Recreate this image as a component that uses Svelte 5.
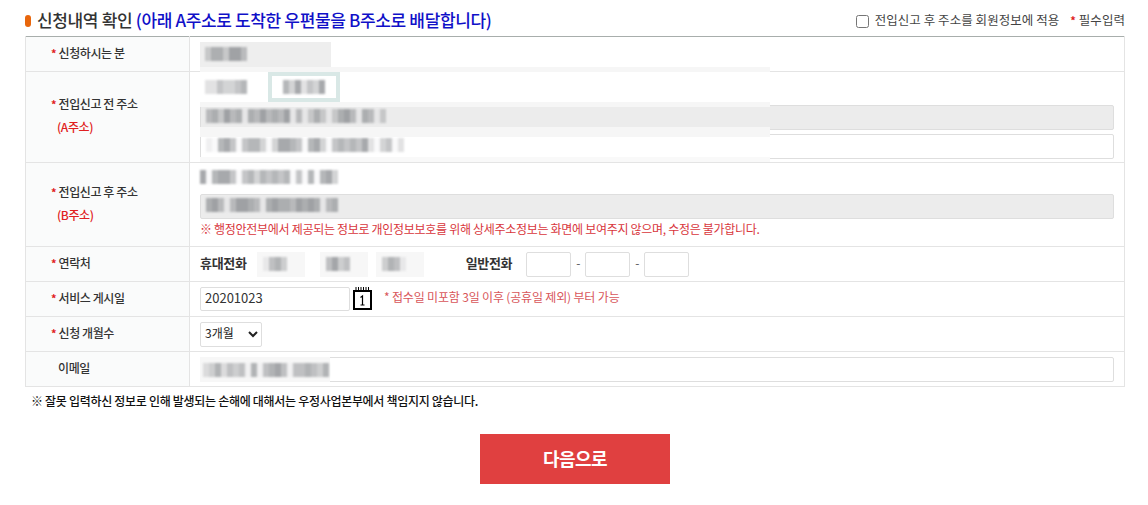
<script>
    // 원본에서 모자이크 처리된 개인정보 영역: 숫자는 셀 농도(0-9)
    const masks = {
        name: '3553664',
        zip: '2243345',
        zip2: '5362436',
        addr1: '453645 5464546 4 353 3564 54 3',
        addr2: '1 564 4553 36654 563 4545462 34 2',
        newAddr: '6 5664 45354545 4 5 563',
        road: '564 46654 565546565 45',
        tel1: '1453',
        tel2: '4634',
        tel3: '3541',
        email: '2352434 5 4564 445435'
    };

    function cells(key) {
        return masks[key].split('').map((c) => (c === ' ' ? 0.04 : Number(c) / 10));
    }
</script>

{#snippet mask(key)}
    <span class="mosaic">
        {#each cells(key) as o}
            <i style="opacity: {o}"></i>
        {/each}
    </span>
{/snippet}

<div class="page">
    <div class="head">
        <h2><span class="dot"></span>신청내역 확인 <em>(아래 A주소로 도착한 우편물을 B주소로 배달합니다)</em></h2>
        <div class="head-right">
            <label><input type="checkbox" />전입신고 후 주소를 회원정보에 적용</label>
            <span class="req-info"><b>*</b> 필수입력</span>
        </div>
    </div>

    <table>
        <tbody>
            <tr class="h35">
                <th><b>*</b> 신청하시는 분</th>
                <td>
                    <div class="patch name">{@render mask('name')}</div>
                </td>
            </tr>
            <tr class="h91">
                <th class="two">
                    <div><b>*</b> 전입신고 전 주소</div>
                    <div class="sub">(A주소)</div>
                </th>
                <td class="addr-a">
                    <div class="band top"></div>
                    <div class="zip-row">
                        <div class="zip">{@render mask('zip')}</div>
                        <div class="zip-found">{@render mask('zip2')}</div>
                    </div>
                    <div class="field gray">{@render mask('addr1')}</div>
                    <div class="field">{@render mask('addr2')}</div>
                    <div class="band b1"></div>
                    <div class="band b2"></div>
                    <div class="band b3"></div>
                </td>
            </tr>
            <tr class="h84">
                <th class="two">
                    <div><b>*</b> 전입신고 후 주소</div>
                    <div class="sub">(B주소)</div>
                </th>
                <td class="addr-b">
                    <div class="plain">{@render mask('newAddr')}</div>
                    <div class="field gray tall">{@render mask('road')}</div>
                    <p class="warn">※ 행정안전부에서 제공되는 정보로 개인정보보호를 위해 상세주소정보는 화면에 보여주지 않으며, 수정은 불가합니다.</p>
                </td>
            </tr>
            <tr class="h35">
                <th><b>*</b> 연락처</th>
                <td>
                    <div class="phone">
                        <strong>휴대전화</strong>
                        <div class="tel first">{@render mask('tel1')}</div>
                        <div class="tel second">{@render mask('tel2')}</div>
                        <div class="tel third">{@render mask('tel3')}</div>
                        <strong class="landline">일반전화</strong>
                        <input class="num" type="text" />
                        <span class="dash">-</span>
                        <input class="num" type="text" />
                        <span class="dash">-</span>
                        <input class="num" type="text" />
                    </div>
                </td>
            </tr>
            <tr class="h35">
                <th><b>*</b> 서비스 게시일</th>
                <td>
                    <div class="date-row">
                        <input class="date" type="text" value="20201023" />
                        <svg class="cal" width="19" height="23" viewBox="0 0 19 23" aria-hidden="true">
                            <path d="M3 0v5M5.500 0v5M8 0v5M10.500 0v5M13 0v5M15.500 0v5" stroke="#000" stroke-width="1" />
                            <rect x="1" y="4" width="17" height="18" fill="#fff" stroke="#000" stroke-width="2" />
                            <path d="M7.500 10.500l2-1.500v9M7.500 18h4" fill="none" stroke="#000" stroke-width="1.200" />
                        </svg>
                        <span class="hint">* 접수일 미포함 3일 이후 (공휴일 제외) 부터 가능</span>
                    </div>
                </td>
            </tr>
            <tr class="h35">
                <th><b>*</b> 신청 개월수</th>
                <td>
                    <select>
                        <option>3개월</option>
                    </select>
                </td>
            </tr>
            <tr class="h35">
                <th class="no-req">이메일</th>
                <td class="email-cell">
                    <div class="email-mask">{@render mask('email')}</div>
                    <div class="field"></div>
                </td>
            </tr>
        </tbody>
    </table>

    <p class="notice">※ 잘못 입력하신 정보로 인해 발생되는 손해에 대해서는 우정사업본부에서 책임지지 않습니다.</p>

    <div class="actions">
        <button type="button">다음으로</button>
    </div>
</div>

<style>
    :global(body) {
        margin: 0;
        background: #fff;
    }
    .page {
        width: 1100px;
        margin-left: 25px;
        font-family: "Noto Sans CJK KR", "Noto Sans", sans-serif;
        color: #333;
        font-size: 12px;
    }
    .head {
        display: flex;
        justify-content: space-between;
        align-items: center;
        height: 36px;
        padding-top: 3px;
        box-sizing: border-box;
    }
    h2 {
        margin: 0;
        font-size: 17px;
        font-weight: 500;
        letter-spacing: -0.35px;
        color: #333;
        display: flex;
        align-items: center;
        white-space: pre-wrap;
    }
    h2 em {
        font-style: normal;
        color: #1010c8;
    }
    .dot {
        width: 6px;
        height: 12px;
        border-radius: 3px;
        background: #e8660c;
        margin: 2px 6px 0 0;
    }
    .head-right {
        display: flex;
        align-items: center;
        gap: 11px;
        font-size: 12.500px;
        letter-spacing: 0.05px;
        color: #444;
    }
    .head-right label {
        display: flex;
        align-items: center;
    }
    .head-right input {
        width: 13px;
        height: 13px;
        margin: 3px 6px 0 0;
    }
    .req-info b, th b {
        color: #e02020;
        font-weight: 700;
        font-size: 11px;
    }
    table {
        width: 1100px;
        border-collapse: collapse;
        table-layout: fixed;
        border-top: 1px solid #a8aeac;
    }
    tr {
        border-bottom: 1px solid #e4e4e4;
    }
    .h35 { height: 35px; }
    .h91 { height: 91px; }
    .h84 { height: 84px; }
    th, td {
        padding: 0;
        border-left: 1px solid #e4e4e4;
        border-right: 1px solid #e4e4e4;
    }
    th {
        width: 164px;
        box-sizing: border-box;
        background: #fafbfb;
        text-align: left;
        padding: 0 0 3px 25px;
        font-size: 12px;
        font-weight: 500;
        letter-spacing: -0.4px;
        color: #333;
    }
    th.two {
        padding-bottom: 4px;
    }
    th.no-req {
        padding-left: 32px;
    }
    .sub {
        color: #e02020;
        margin: 6px 0 0 6px;
    }
    td {
        padding-left: 10px;
        box-sizing: border-box;
        position: relative;
    }
    .mosaic {
        display: flex;
        height: 14px;
        filter: blur(1px);
    }
    .mosaic i {
        width: 6px;
        height: 14px;
        background: #6c6f74;
    }
    .patch.name {
        width: 131px;
        height: 25px;
        background: #eeeeee;
        display: flex;
        align-items: center;
        padding-left: 5px;
        box-sizing: border-box;
    }
    /* 모자이크 가장자리에 남은 옅은 띠 */
    .band {
        position: absolute;
        left: 10px;
        width: 570px;
        background: #f6f6f6;
    }
    .band.top { top: -5px; height: 5px; }
    .band.b1 { top: 30px; height: 5px; }
    .band.b2 { top: 55px; height: 10px; }
    .band.b3 { top: 85px; height: 5px; background: #f9f9f9; }
    .addr-a {
        vertical-align: top;
    }
    .zip-row {
        display: flex;
        height: 30px;
        align-items: center;
    }
    .zip {
        width: 62px;
        height: 21px;
        display: flex;
        align-items: center;
        padding-left: 5px;
        box-sizing: border-box;
    }
    .zip-found {
        width: 72px;
        height: 30px;
        margin-left: 6px;
        border: 4px solid #d9e8e6;
        box-sizing: border-box;
        display: flex;
        align-items: center;
        padding-left: 11px;
    }
    .field {
        width: 914px;
        height: 25px;
        border: 1px solid #dedede;
        border-radius: 2px;
        box-sizing: border-box;
        display: flex;
        align-items: center;
        padding: 0 0 3px 5px;
        background: #fff;
    }
    .field.gray {
        background: #ececec;
        margin: 3px 0 4px;
    }
    .field.tall {
        margin: 4px 0 1px;
    }
    .addr-b {
        vertical-align: top;
        padding-top: 1px;
    }
    .plain {
        height: 26px;
        display: flex;
        align-items: center;
    }
    .warn {
        margin: 0;
        color: #d8363c;
        font-size: 12px;
        line-height: 17px;
        letter-spacing: -0.3px;
        white-space: nowrap;
    }
    .phone {
        display: flex;
        align-items: center;
    }
    strong {
        font-size: 13px;
        font-weight: 700;
        color: #333;
        letter-spacing: -0.3px;
        padding-bottom: 4px;
    }
    .tel {
        width: 48px;
        height: 25px;
        display: flex;
        align-items: center;
        padding-left: 6px;
        box-sizing: border-box;
        background: #f7f7f7;
    }
    .tel.first { margin-left: 10px; }
    .tel.second { margin-left: 15px; }
    .tel.third { margin-left: 8px; }
    .landline {
        margin-left: 42px;
    }
    .num {
        width: 45px;
        height: 25px;
        box-sizing: border-box;
        border: 1px solid #dedede;
        border-radius: 2px;
        padding: 0;
    }
    .landline + .num {
        margin-left: 14px;
    }
    .dash {
        width: 14px;
        text-align: center;
        color: #555;
        padding-bottom: 3px;
    }
    .date-row {
        display: flex;
        align-items: center;
    }
    .date {
        width: 150px;
        height: 24px;
        box-sizing: border-box;
        border: 1px solid #dedede;
        border-radius: 2px;
        padding: 0 4px 3px;
        font: 13px "Noto Sans CJK KR", sans-serif;
        color: #333;
    }
    .cal {
        margin: 0 0 2px 3px;
    }
    .hint {
        margin-left: 12px;
        padding-bottom: 5px;
        color: #d8565a;
        font-size: 12px;
        letter-spacing: -0.17px;
    }
    select {
        display: block;
        width: 62px;
        height: 25px;
        box-sizing: border-box;
        border: 1px solid #dedede;
        border-radius: 2px;
        background: #fff;
        padding-bottom: 3px;
        font: 12px "Noto Sans CJK KR", sans-serif;
        color: #222;
    }
    .email-mask {
        position: absolute;
        left: 10px;
        top: 5px;
        width: 130px;
        height: 25px;
        background: #f7f7f7;
        display: flex;
        align-items: center;
        padding-left: 3px;
        box-sizing: border-box;
    }
    .notice {
        margin: 5px 0 0 6px;
        font-size: 12px;
        font-weight: 500;
        letter-spacing: -0.3px;
        color: #111;
    }
    .actions {
        display: flex;
        justify-content: center;
        margin-top: 25px;
    }
    button {
        width: 190px;
        height: 50px;
        border: 0;
        padding: 0 0 2px;
        background: #e04040;
        color: #fff;
        font: 700 18px "Noto Sans CJK KR", sans-serif;
        letter-spacing: -0.5px;
    }
</style>
